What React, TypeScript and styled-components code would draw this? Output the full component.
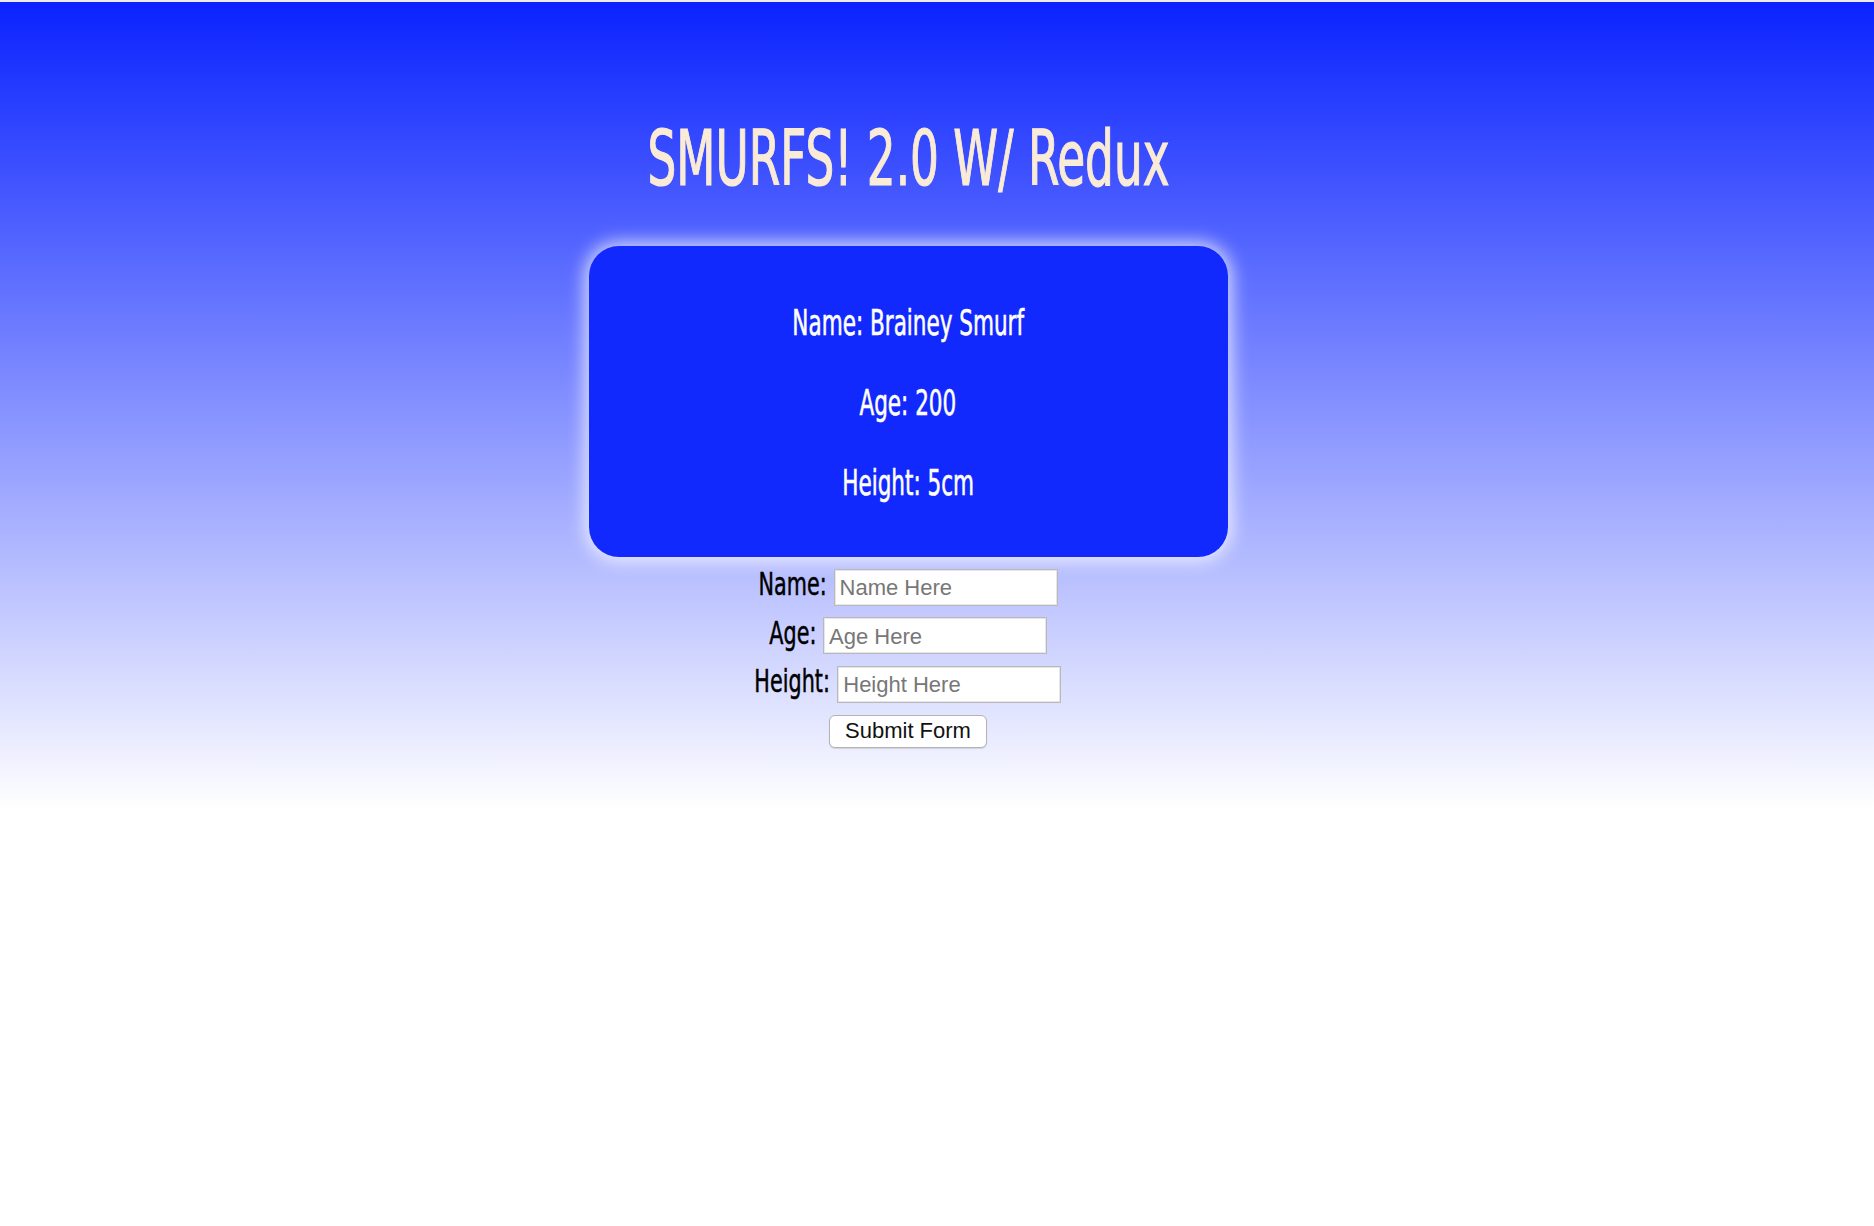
import React from "react";
import styled, { createGlobalStyle, css } from "styled-components";

const GlobalStyle = createGlobalStyle`
  html, body {
    margin: 0;
    padding: 0;
    background: #ffffff;
  }
  body {
    font-family: "Liberation Sans", Arial, sans-serif;
  }
`;

const condensed = css`
  font-family: "DejaVu Sans Condensed", "DejaVu Sans", sans-serif;
  font-weight: 400;
  white-space: nowrap;
`;

const Page = styled.div`
  border-top: 2px solid #ececec;
  min-height: 1224px;
  background: linear-gradient(to bottom, #0a23ff 0px, #ffffff 808px, #ffffff 100%);
`;

const Column = styled.div`
  display: flex;
  flex-direction: column;
  align-items: center;
  padding: 118px 58px 0 0;
`;

const Title = styled.h1`
  ${condensed};
  margin: 0;
  font-size: 77px;
  line-height: 77px;
  color: #faebd7;
  -webkit-text-stroke: 1.2px #faebd7;
  transform: scaleX(0.655);
`;

const Card = styled.div`
  margin-top: 49px;
  width: 639px;
  box-sizing: border-box;
  padding: 59px 0 56px;
  border-radius: 30px;
  background: #1229fd;
  box-shadow: 0 0 18px 4px rgba(255, 255, 255, 0.75);
  display: flex;
  flex-direction: column;
  align-items: center;
  gap: 44px;
`;

const Stat = styled.p`
  ${condensed};
  margin: 0;
  font-size: 36px;
  line-height: 36px;
  color: #ffffff;
  -webkit-text-stroke: 0.6px #ffffff;
  transform: scaleX(0.665);
`;

const Form = styled.form`
  margin-top: 11px;
  display: flex;
  flex-direction: column;
  align-items: center;
  gap: 11px;
`;

const Row = styled.div`
  display: flex;
  align-items: baseline;
  justify-content: center;
  gap: 7px;
`;

const Label = styled.label<{ $pull: number }>`
  ${condensed};
  display: inline-block;
  font-size: 32px;
  line-height: 32px;
  color: #000000;
  -webkit-text-stroke: 0.5px #000000;
  transform: scaleX(0.72);
  transform-origin: right center;
  margin-left: ${(p) => -p.$pull}px;
`;

const Input = styled.input`
  box-sizing: border-box;
  width: 224px;
  height: 37px;
  margin: 0;
  padding: 2px 5px 0;
  border: 1px solid #b9b9b9;
  box-shadow: inset 0 0 0 1px #e6e6e6;
  border-radius: 0;
  background: #ffffff;
  font-family: "Liberation Sans", Arial, sans-serif;
  font-size: 22px;
  color: #222;
  outline: none;
  &::placeholder {
    color: #777777;
  }
`;

const SubmitButton = styled.button`
  margin-top: 1px;
  box-sizing: border-box;
  width: 158px;
  height: 33px;
  padding: 0;
  border: 1px solid #b3b3b3;
  border-radius: 6px;
  background: #ffffff;
  box-shadow: 0 1px 1px rgba(0, 0, 0, 0.12);
  font-family: "Liberation Sans", Arial, sans-serif;
  font-size: 22px;
  color: #111;
  cursor: pointer;
`;

const smurf = { name: "Brainey Smurf", age: 200, height: "5cm" };

const fields = [
  { key: "name", label: "Name:", placeholder: "Name Here", pull: 26.5 },
  { key: "age", label: "Age:", placeholder: "Age Here", pull: 18.3 },
  { key: "height", label: "Height:", placeholder: "Height Here", pull: 29.4 },
];

export default function App() {
  return (
    <>
      <GlobalStyle />
      <Page>
        <Column>
          <Title>SMURFS! 2.0 W/ Redux</Title>
          <Card>
            <Stat>Name: {smurf.name}</Stat>
            <Stat>Age: {smurf.age}</Stat>
            <Stat>Height: {smurf.height}</Stat>
          </Card>
          <Form onSubmit={(e) => e.preventDefault()}>
            {fields.map((f) => (
              <Row key={f.key}>
                <Label htmlFor={f.key} $pull={f.pull}>
                  {f.label}
                </Label>
                <Input id={f.key} name={f.key} placeholder={f.placeholder} />
              </Row>
            ))}
            <SubmitButton type="submit">Submit Form</SubmitButton>
          </Form>
        </Column>
      </Page>
    </>
  );
}
